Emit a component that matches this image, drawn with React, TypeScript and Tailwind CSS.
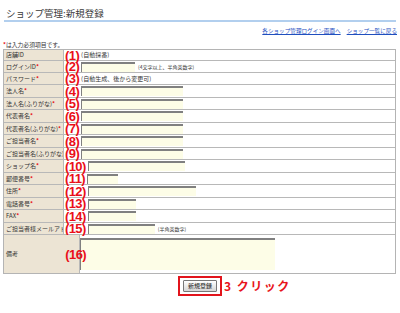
import React from "react";

type Row = {
  n: number;
  label: string;
  req: boolean;
  h: string;
  text?: string;
  input?: string;
  hint?: string;
};

const rows: Row[] = [
  { n: 1, label: "店舗ID", req: false, h: "h-[11px]", text: "(自動採番)" },
  { n: 2, label: "ログインID", req: true, h: "h-[12px]", input: "w-[54px]", hint: "(4文字以上、半角英数字)" },
  { n: 3, label: "パスワード", req: true, h: "h-[12px]", text: "(自動生成、後から変更可)" },
  { n: 4, label: "法人名", req: true, h: "h-[13px]", input: "w-[102px]" },
  { n: 5, label: "法人名(ふりがな)", req: true, h: "h-[12px]", input: "w-[102px]" },
  { n: 6, label: "代表者名", req: true, h: "h-[13px]", input: "w-[102px]" },
  { n: 7, label: "代表者名(ふりがな)", req: true, h: "h-[12px]", input: "w-[102px]" },
  { n: 8, label: "ご担当者名", req: true, h: "h-[13px]", input: "w-[102px]" },
  { n: 9, label: "ご担当者名(ふりがな)", req: true, h: "h-[12px]", input: "w-[102px]" },
  { n: 10, label: "ショップ名", req: true, h: "h-[13px]", input: "w-[97px]" },
  { n: 11, label: "郵便番号", req: true, h: "h-[12px]", input: "w-[31px]" },
  { n: 12, label: "住所", req: true, h: "h-[13px]", input: "w-[108px]" },
  { n: 13, label: "電話番号", req: true, h: "h-[12px]", input: "w-[48px]" },
  { n: 14, label: "FAX", req: true, h: "h-[13px]", input: "w-[48px]" },
  { n: 15, label: "ご担当者様メールアドレス", req: true, h: "h-[12px]", input: "w-[67px]", hint: "(半角英数字)" },
];

function Callout({ n }: { n: number }) {
  return (
    <span className="shrink-0 font-['Liberation_Sans',sans-serif] text-[13px] font-bold leading-none text-[#ea0f18] tracking-[-0.6px]">
      ({n})
    </span>
  );
}

function Label({ text, req }: { text: string; req: boolean }) {
  return (
    <span className="whitespace-nowrap">
      {text}
      {req && <span className="text-[#e8141b] font-bold">*</span>}
    </span>
  );
}

export default function App() {
  return (
    <div className="w-[400px] h-[313px] overflow-hidden bg-white font-['Noto_Sans_CJK_JP',sans-serif] text-[#333]">
      {/* タイトル */}
      <div className="mx-[4px] mt-[7px] h-[15px] border-b-2 border-[#b2cfee] pl-[2px] text-[9.5px] leading-[13px] text-[#3a3a3a]">
        ショップ管理:新規登録
      </div>

      <div className="mt-[5px] flex h-[9px] items-center justify-end gap-[6px] pr-[3px] text-[5.6px] leading-none text-[#1f4fbf]">
        <span className="underline">各ショップ管理ログイン画面へ</span>
        <span className="underline">ショップ一覧に戻る</span>
      </div>

      <div className="mt-[5px] flex h-[8px] items-center pl-[3px] text-[5.8px] leading-none">
        <span className="text-[#e8141b] font-bold">*</span>は入力必須項目です。
      </div>

      {/* フォーム */}
      <div className="ml-[3px] w-[393px] border border-[#b4b4b4] divide-y divide-[#b8b8b8] text-[6px] leading-none">
        {rows.map((r) => (
          <div key={r.n} className={`flex ${r.h}`}>
            <div className="flex w-[60px] shrink-0 items-center overflow-hidden border-r border-[#b8b8b8] bg-[#ece4d4] pl-[2px]">
              <Label text={r.label} req={r.req} />
            </div>
            <div className="flex flex-1 items-center gap-[1px] pl-[1px]">
              <Callout n={r.n} />
              {r.text && <span className="ml-[1px] whitespace-nowrap">{r.text}</span>}
              {r.input && (
                <span className={`ml-[1px] h-[10px] ${r.input} border-t-2 border-l border-[#808080] bg-[#fdfde7]`} />
              )}
              {r.hint && <span className="ml-[2px] whitespace-nowrap text-[5px]">{r.hint}</span>}
            </div>
          </div>
        ))}
        <div className="flex h-[38px]">
          <div className="flex w-[76px] shrink-0 items-center border-r border-[#b8b8b8] bg-[#ece4d4] pl-[2px]">
            <span>備考</span>
            <span className="relative z-10 ml-auto -mr-[7px]">
              <Callout n={16} />
            </span>
          </div>
          <div className="flex flex-1 items-center">
            <span className="h-[32px] w-[195px] border-t-2 border-l border-[#808080] bg-[#fdfde7]" />
          </div>
        </div>
      </div>

      {/* 送信 */}
      <div className="mt-[2px] flex justify-center">
        <div className="relative border-2 border-[#e2141c] px-[3px] py-[2px]">
          <button className="flex h-[12px] w-[34px] items-center justify-center rounded-[1px] border border-[#777] bg-gradient-to-b from-white to-[#d6d6d6] text-[6px] leading-none text-[#222]">
            新規登録
          </button>
          <span className="absolute left-full top-1/2 ml-[4px] -translate-y-1/2 whitespace-nowrap text-[12px] font-bold leading-none tracking-[1.5px] text-[#e8141b]">
            3 クリック
          </span>
        </div>
      </div>
    </div>
  );
}
